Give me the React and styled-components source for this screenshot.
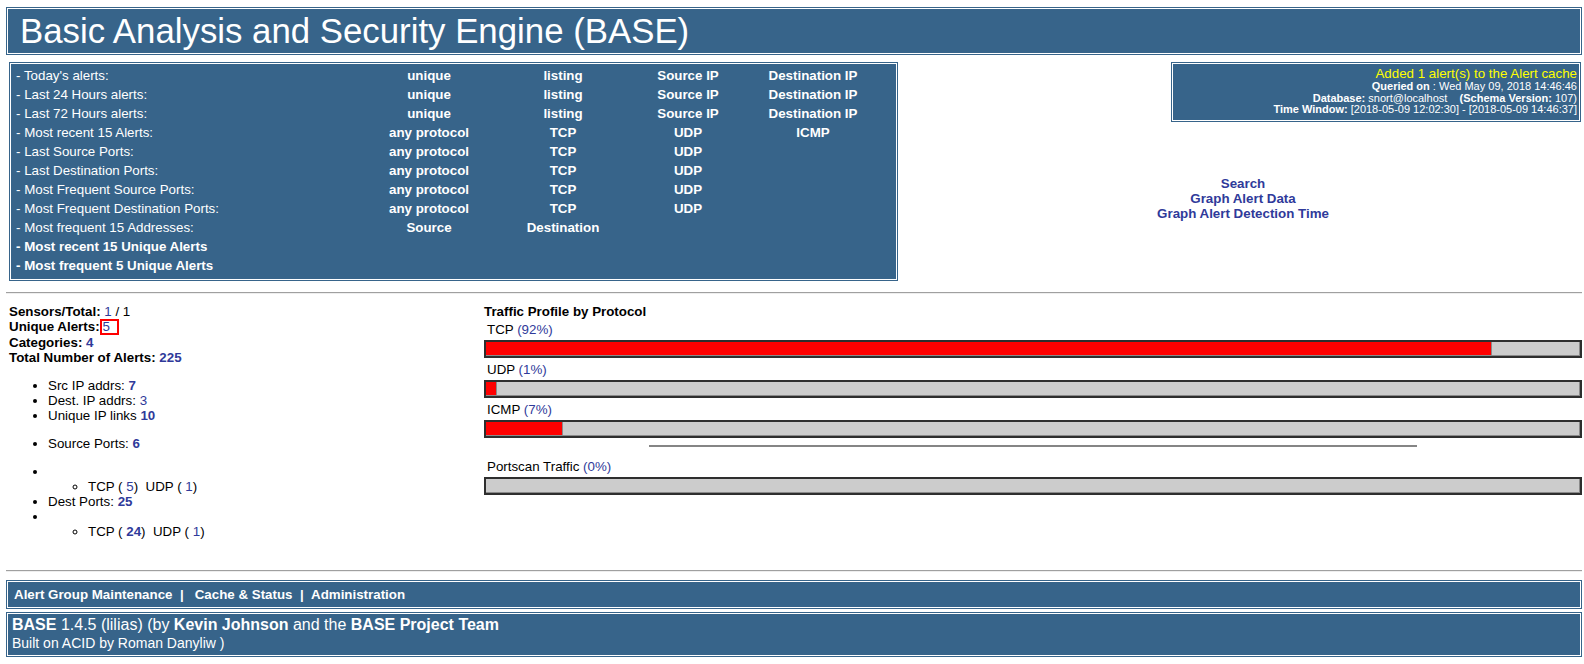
import React from 'react';
import styled, { createGlobalStyle } from 'styled-components';

const BLUE = '#37648a';
const LINK = '#2f3a9a';

const GlobalStyle = createGlobalStyle`
    html, body {
        margin: 0;
        padding: 0;
        background: #fff;
    }
    body {
        font-family: "Liberation Sans", Arial, sans-serif;
        font-size: 13.33px;
        color: #000;
    }
`;

const Page = styled.div`
    padding: 7px 2px 8px 6px;
`;

// blue cell with the thin white ring that an html table border leaves
const Panel = styled.div`
    background: ${BLUE};
    color: #fff;
    border: 1px solid ${BLUE};
    box-shadow: inset 0 0 0 1px #fff;
`;

const Header = styled(Panel)`
    height: 46px;
    padding-left: 13px;
    font-size: 34.8px;
    line-height: 46px;
    white-space: nowrap;
`;

const Top = styled.div`
    display: flex;
    align-items: flex-start;
    margin-top: 7px;
`;

const Menu = styled(Panel)`
    width: 884px;
    margin-left: 3px;
    padding: 3px 0 5px 3px;
    display: grid;
    grid-template-columns: 353px 126px 142px 108px 142px;
    grid-auto-rows: 19px;
    line-height: 19px;
    font-size: 13.33px;
    box-sizing: content-box;
`;

const MenuLabel = styled.div`
    padding-left: 3px;
    font-weight: ${p => (p.$bold ? 'bold' : 'normal')};
    white-space: nowrap;
    grid-column: ${p => (p.$wide ? '1 / -1' : 'auto')};
`;

const MenuLink = styled.a`
    color: #fff;
    font-weight: bold;
    text-decoration: none;
    text-align: center;
    white-space: nowrap;
`;

const Side = styled.div`
    flex: 1;
    display: flex;
    flex-direction: column;
`;

const Info = styled(Panel)`
    align-self: flex-end;
    width: 402px;
    margin-right: 1px;
    padding: 3px 3px 5px;
    text-align: right;
    font-size: 11px;
    line-height: 11.5px;
    white-space: nowrap;
`;

const Notice = styled.div`
    color: #ffff00;
    font-size: 13.33px;
    line-height: 15px;
`;

const Links = styled.div`
    margin-top: 54px;
    padding-left: 6px;
    display: flex;
    flex-direction: column;
    align-items: center;
    line-height: 15px;
`;

const NavLink = styled.a`
    color: ${LINK};
    font-weight: bold;
    text-decoration: none;
`;

const Rule = styled.hr`
    margin: ${p => p.$top || 0}px 0 0;
    height: 0;
    border: 0;
    border-top: 1px solid #a0a0a0;
    border-bottom: 1px solid #eeeeee;
`;

const Stats = styled.div`
    display: grid;
    grid-template-columns: 478px 1fr;
    margin-top: 10px;
    line-height: 15px;
`;

const Summary = styled.div`
    padding-left: 3px;
`;

const Line = styled.div`
    white-space: nowrap;
`;

const Label = styled.b``;

const Num = styled.a`
    color: ${LINK};
    font-weight: ${p => (p.$bold ? 'bold' : 'normal')};
    text-decoration: none;
`;

const Focused = styled(Num)`
    display: inline-block;
    border: 2px solid #ff0000;
    padding: 0 7px 0 1px;
    line-height: 12px;
    vertical-align: middle;
`;

const List = styled.ul`
    margin: 13px 0;
    padding-left: 39px;
    list-style: disc;
`;

const SubList = styled.ul`
    margin: 0;
    padding-left: 40px;
    list-style: circle;
`;

const Traffic = styled.div`
    display: flex;
    flex-direction: column;
`;

const TrafficTitle = styled.div`
    font-weight: bold;
`;

const BarLabel = styled.div`
    padding-left: 3px;
    margin-top: ${p => p.$top || 0}px;
    margin-bottom: 3px;
`;

const Bar = styled.div`
    display: flex;
    height: 14px;
    border: 2px solid #2e2e2e;
    margin-bottom: 4px;
`;

const Fill = styled.div`
    background: ${p => (p.$hot ? '#ff0000' : '#cccccc')};
    box-shadow: inset -1px -1px 0 #8a8a8a;
    flex: ${p => (p.$hot ? 'none' : '1')};
`;

const ShortRule = styled.div`
    width: 70%;
    height: 2px;
    margin: 3px auto 0;
    background: #858585;
`;

const Footer = styled(Panel)`
    margin-top: 8px;
    height: 27px;
    line-height: 27px;
    padding-left: 7px;
    font-weight: bold;
    white-space: nowrap;
`;

const Credits = styled(Panel)`
    margin-top: 3px;
    padding: 3px 0 4px 5px;
    font-size: 14px;
    line-height: 18px;
`;

const CreditsLead = styled.div`
    font-size: 16px;
`;

const menuRows = [
    ["- Today's alerts:", 'unique', 'listing', 'Source IP', 'Destination IP'],
    ['- Last 24 Hours alerts:', 'unique', 'listing', 'Source IP', 'Destination IP'],
    ['- Last 72 Hours alerts:', 'unique', 'listing', 'Source IP', 'Destination IP'],
    ['- Most recent 15 Alerts:', 'any protocol', 'TCP', 'UDP', 'ICMP'],
    ['- Last Source Ports:', 'any protocol', 'TCP', 'UDP', ''],
    ['- Last Destination Ports:', 'any protocol', 'TCP', 'UDP', ''],
    ['- Most Frequent Source Ports:', 'any protocol', 'TCP', 'UDP', ''],
    ['- Most Frequent Destination Ports:', 'any protocol', 'TCP', 'UDP', ''],
    ['- Most frequent 15 Addresses:', 'Source', 'Destination', '', ''],
];

const protocols = [
    { name: 'TCP', pct: 92 },
    { name: 'UDP', pct: 1 },
    { name: 'ICMP', pct: 7 },
];

const NB = '\u00a0';

function TrafficBar({ pct }) {
    return (
        <Bar>
            {pct > 0 && <Fill $hot style={{ width: `${pct}%` }} />}
            <Fill />
        </Bar>
    );
}

export default function App() {
    return (
        <Page>
            <GlobalStyle />
            <Header>Basic Analysis and Security Engine (BASE)</Header>

            <Top>
                <Menu>
                    {menuRows.map((row, i) => (
                        <React.Fragment key={i}>
                            <MenuLabel>{row[0]}</MenuLabel>
                            {row.slice(1).map((cell, j) =>
                                cell ? <MenuLink key={j} href="#">{cell}</MenuLink> : <span key={j} />
                            )}
                        </React.Fragment>
                    ))}
                    <MenuLabel $bold $wide>- Most recent 15 Unique Alerts</MenuLabel>
                    <MenuLabel $bold $wide>- Most frequent 5 Unique Alerts</MenuLabel>
                </Menu>

                <Side>
                    <Info>
                        <Notice>Added 1 alert(s) to the Alert cache</Notice>
                        <div><b>Queried on</b> : Wed May 09, 2018 14:46:46</div>
                        <div>
                            <b>Database:</b> snort@localhost{NB + NB + NB + ' '}<b>(Schema Version:</b> 107)
                        </div>
                        <div><b>Time Window:</b> [2018-05-09 12:02:30] - [2018-05-09 14:46:37]</div>
                    </Info>
                    <Links>
                        <NavLink href="#">Search</NavLink>
                        <NavLink href="#">Graph Alert Data</NavLink>
                        <NavLink href="#">Graph Alert Detection Time</NavLink>
                    </Links>
                </Side>
            </Top>

            <Rule $top={11} />

            <Stats>
                <Summary>
                    <Line><Label>Sensors/Total:</Label> <Num href="#">1</Num> / 1</Line>
                    <Line><Label>Unique Alerts:</Label><Focused href="#">5</Focused></Line>
                    <Line><Label>Categories:</Label> <Num $bold href="#">4</Num></Line>
                    <Line><Label>Total Number of Alerts:</Label> <Num $bold href="#">225</Num></Line>

                    <List>
                        <li>Src IP addrs: <Num $bold href="#">7</Num></li>
                        <li>Dest. IP addrs: <Num href="#">3</Num></li>
                        <li>Unique IP links <Num $bold href="#">10</Num></li>
                    </List>
                    <List>
                        <li>Source Ports: <Num $bold href="#">6</Num></li>
                    </List>
                    <List>
                        <li>
                            {NB}
                            <SubList>
                                <li>TCP ( <Num href="#">5</Num>){NB} UDP ( <Num href="#">1</Num>)</li>
                            </SubList>
                        </li>
                        <li>Dest Ports: <Num $bold href="#">25</Num></li>
                        <li>
                            {NB}
                            <SubList>
                                <li>TCP ( <Num $bold href="#">24</Num>){NB} UDP ( <Num href="#">1</Num>)</li>
                            </SubList>
                        </li>
                    </List>
                </Summary>

                <Traffic>
                    <TrafficTitle>Traffic Profile by Protocol</TrafficTitle>
                    {protocols.map((p, i) => (
                        <React.Fragment key={p.name}>
                            <BarLabel $top={i === 0 ? 3 : 0}>
                                {p.name} <Num href="#">({p.pct}%)</Num>
                            </BarLabel>
                            <TrafficBar pct={p.pct} />
                        </React.Fragment>
                    ))}
                    <ShortRule />
                    <BarLabel $top={12}>
                        Portscan Traffic <Num href="#">(0%)</Num>
                    </BarLabel>
                    <TrafficBar pct={0} />
                </Traffic>
            </Stats>

            <Rule $top={18} />

            <Footer>
                {`Alert Group Maintenance${NB}${NB}|${NB}${NB}${NB}Cache & Status${NB}${NB}|${NB}${NB}Administration`}
            </Footer>
            <Credits>
                <CreditsLead>
                    <b>BASE</b> 1.4.5 (lilias) (by <b>Kevin Johnson</b> and the <b>BASE Project Team</b>
                </CreditsLead>
                <div>Built on ACID by Roman Danyliw )</div>
            </Credits>
        </Page>
    );
}
